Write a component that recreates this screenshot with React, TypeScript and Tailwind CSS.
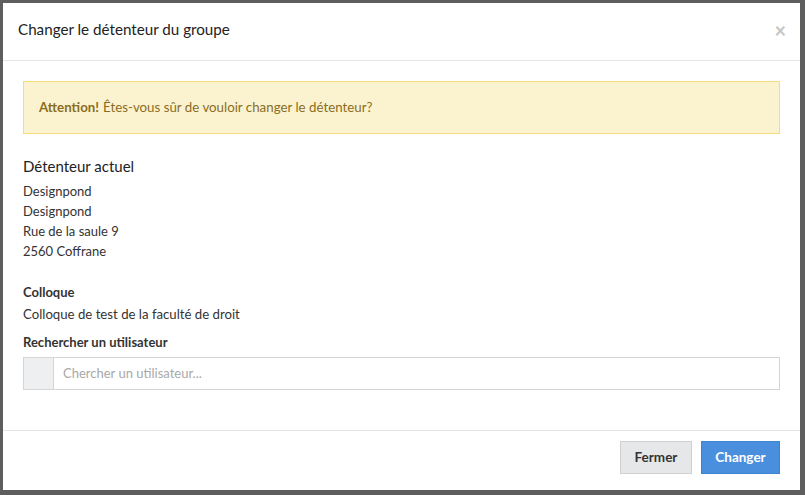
import React from 'react';

const App = () => {
  return (
    <div
      className="w-[805px] h-[495px] bg-[#5e5e5e] pt-[3px] pl-[3px] overflow-hidden"
      style={{ fontFamily: 'Lato, "Noto Sans", sans-serif' }}
    >
      <div className="w-[797px] h-[487px] bg-white flex flex-col">
        {/* Header */}
        <div className="h-[58px] shrink-0 flex items-center justify-between pl-[15px] pr-[14px] pb-[4px] border-b border-[#e5e5e5]">
          <h4 className="text-[15.2px] text-[#222]">Changer le détenteur du groupe</h4>
          <button className="text-[#c4c4c4] text-[20px] font-bold leading-none">×</button>
        </div>

        {/* Body */}
        <div className="flex-1 px-[20px] pt-[20px]">
          <div className="h-[53px] flex items-center px-[15px] bg-[#fbf3d0] border border-[#f5dc7d] text-[13.3px] text-[#8a6d1f]">
            <span className="font-bold mr-1">Attention!</span>
            Êtes-vous sûr de vouloir changer le détenteur?
          </div>

          <h4 className="mt-[22px] text-[15px] text-[#222] leading-[20px]">Détenteur actuel</h4>
          <div className="mt-[5px] text-[13px] text-[#333] leading-[20px]">
            <div>Designpond</div>
            <div>Designpond</div>
            <div>Rue de la saule 9</div>
            <div>2560 Coffrane</div>
          </div>

          <div className="mt-[21px] text-[13px] font-bold text-[#333] leading-[20px]">Colloque</div>
          <div className="mt-[2px] text-[13.2px] text-[#333] leading-[20px]">Colloque de test de la faculté de droit</div>

          <div className="mt-[8px] text-[13px] font-bold text-[#333] leading-[20px]">Rechercher un utilisateur</div>
          <div className="mt-[5px] flex h-[33px] border border-[#d5d5d5]">
            <div className="w-[30px] bg-[#eeeff1] border-r border-[#d5d5d5]" />
            <input
              className="flex-1 px-[9px] text-[13px] text-[#333] placeholder:text-[#a8a8a8] outline-none"
              placeholder="Chercher un utilisateur..."
            />
          </div>
        </div>

        {/* Footer */}
        <div className="h-[60px] shrink-0 border-t border-[#e5e5e5] flex justify-end items-start pt-[10px] pr-[20px] gap-[9px]">
          <button className="h-[33px] w-[72px] bg-[#e6e7e8] border border-[#cfd0d2] text-[13.5px] font-bold text-[#333]">
            Fermer
          </button>
          <button className="h-[33px] w-[79px] bg-[#4a8fde] border border-[#3f83d3] text-[13.5px] font-bold text-white">
            Changer
          </button>
        </div>
      </div>
    </div>
  );
};

export default App;
